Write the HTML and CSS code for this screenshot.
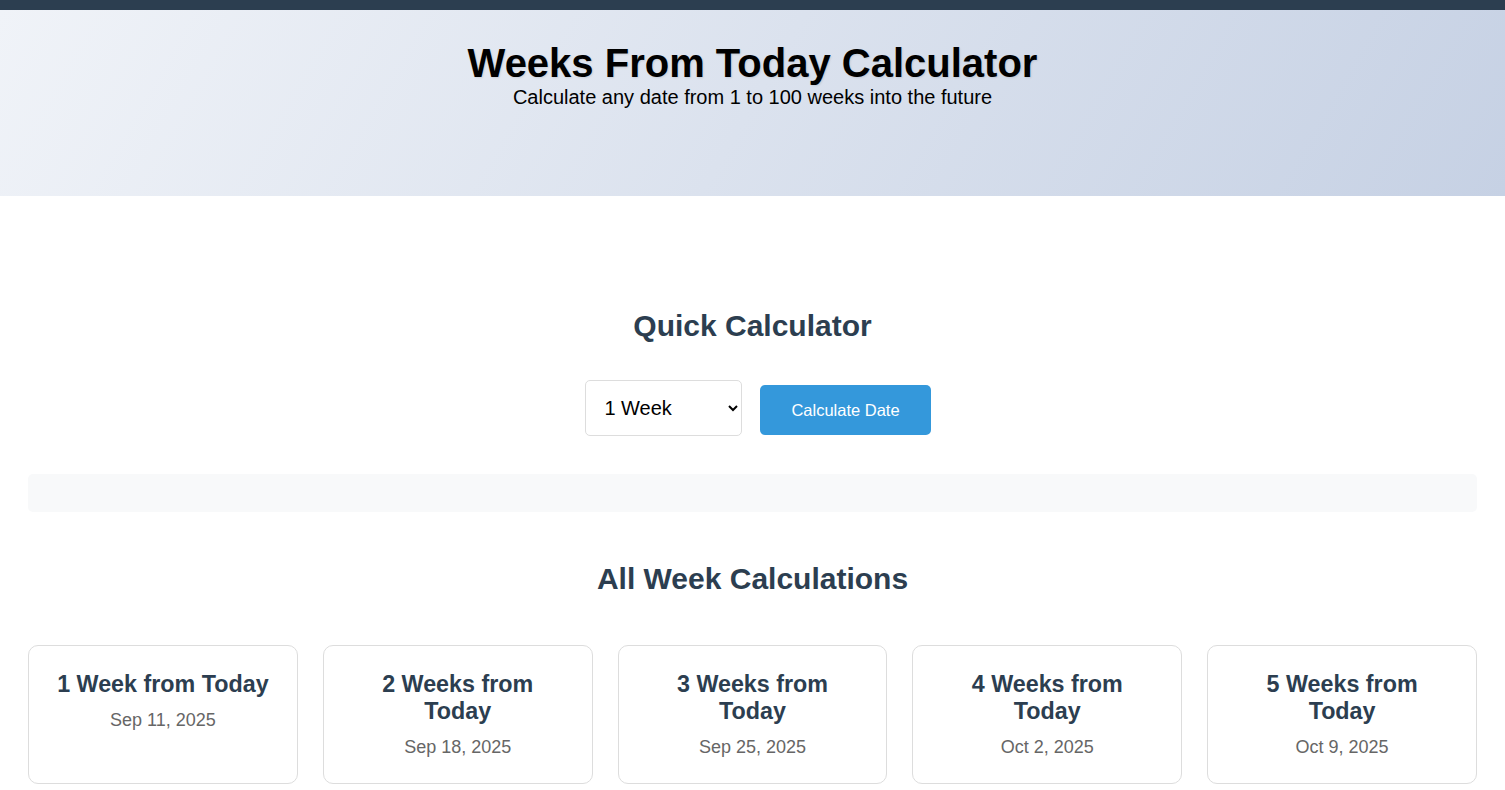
FILE: index.html
```html
<!DOCTYPE html>
<html lang="en">
<head>
    <meta charset="UTF-8">
    <meta name="viewport" content="width=device-width, initial-scale=1.0">
    <title>Weeks From Today Calculator</title>
    <link rel="stylesheet" href="styles.css">
</head>
<body>
    <div class="top-bar"></div>
    <header class="hero">
        <h1>Weeks From Today Calculator</h1>
        <p>Calculate any date from 1 to 100 weeks into the future</p>
    </header>
    <main class="container">
        <section class="quick">
            <h2>Quick Calculator</h2>
            <div class="controls">
                <select id="weekSelect">
                    <option value="1">1 Week</option>
                    <option value="2">2 Weeks</option>
                    <option value="3">3 Weeks</option>
                    <option value="4">4 Weeks</option>
                    <option value="5">5 Weeks</option>
                    <option value="10">10 Weeks</option>
                </select>
                <button class="calc-btn">Calculate Date</button>
            </div>
            <div id="result" class="result"></div>
        </section>
        <section class="all">
            <h2>All Week Calculations</h2>
            <div class="card-grid">
                <div class="card"><h3>1 Week from Today</h3><p>Sep 11, 2025</p></div>
                <div class="card"><h3>2 Weeks from Today</h3><p>Sep 18, 2025</p></div>
                <div class="card"><h3>3 Weeks from Today</h3><p>Sep 25, 2025</p></div>
                <div class="card"><h3>4 Weeks from Today</h3><p>Oct 2, 2025</p></div>
                <div class="card"><h3>5 Weeks from Today</h3><p>Oct 9, 2025</p></div>
            </div>
        </section>
    </main>
</body>
</html>
```

FILE: styles.css
```css
body {
    margin: 0;
    font-family: "Liberation Sans", Arial, sans-serif;
    color: #333;
    background: #fff;
}
.top-bar {
    height: 10px;
    background-color: #2c3e50;
}
.hero {
    background: linear-gradient(120deg, #f0f3f8 0%, #c6d1e4 100%);
    text-align: center;
    padding: 30px 20px 87px;
}
.hero h1 {
    margin: 0;
    font-size: 40px;
    line-height: 46px;
    color: #000;
    text-shadow: 1px 1px 2px rgba(0, 0, 0, 0.1);
}
.hero p {
    margin: 0;
    font-size: 20px;
    line-height: 23px;
    color: #000;
}
.container {
    padding: 0 28px;
}
h2 {
    margin: 0;
    text-align: center;
    font-size: 30px;
    line-height: 34px;
    color: #2c3e50;
}
.quick {
    padding-top: 113px;
}
.controls {
    display: flex;
    justify-content: center;
    align-items: center;
    gap: 18px;
    margin: 37px 0 0 11px;
}
.controls select {
    width: 157px;
    height: 56px;
    padding: 0 14px;
    font-family: inherit;
    font-size: 20px;
    color: #000;
    background: #fff;
    border: 1px solid #ddd;
    border-radius: 5px;
}
.calc-btn {
    padding: 15px 31px;
    margin-top: 3px;
    font-family: inherit;
    font-size: 16.5px;
    line-height: 20px;
    color: #fff;
    background-color: #3498db;
    border: none;
    border-radius: 5px;
    cursor: pointer;
}
.calc-btn:hover {
    background-color: #2980b9;
}
.result {
    margin-top: 38px;
    height: 38px;
    background-color: #f8f9fa;
    border-radius: 5px;
}
.all {
    padding-top: 50px;
}
.card-grid {
    display: grid;
    grid-template-columns: repeat(5, 1fr);
    gap: 25px;
    margin-top: 49px;
    padding-bottom: 20px;
}
.card {
    padding: 25px 25px 24px;
    text-align: center;
    border: 1px solid #ddd;
    border-radius: 10px;
    background: #fff;
}
.card h3 {
    margin: 0 0 10px;
    font-size: 23.3px;
    line-height: 27px;
    color: #2c3e50;
}
.card p {
    margin: 0;
    font-size: 18px;
    line-height: 24px;
    color: #666;
}
```
